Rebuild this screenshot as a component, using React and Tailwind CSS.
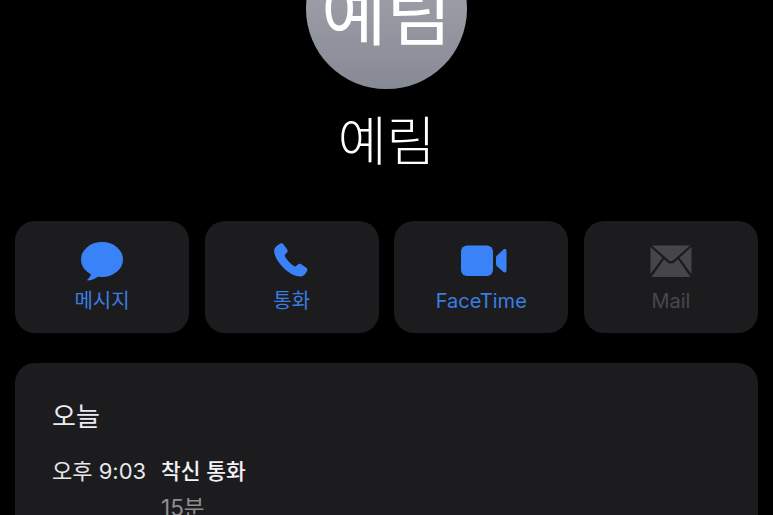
import React from "react";

const BLUE = "#3a82f7";

const MessageIcon = () => (
  <svg width="44" height="40" viewBox="0 0 44 40" fill={BLUE}>
    <ellipse cx="22" cy="18.5" rx="21" ry="17.5" />
    <path d="M11 30 C11.5 34 9.5 37 7.5 38.5 C7 39 7.5 39.6 8.2 39.5 C12.5 39.2 16 37.5 19 34.5 Z" />
  </svg>
);

const PhoneIcon = () => (
  <svg className="mr-[3px]" width="38" height="38" viewBox="0 0 36 36" fill={BLUE}>
    <path d="M8.6 1.6 C9.8 0.9 11 1.1 11.8 2.2 L15.2 6.9 C16 8 15.9 9.2 15 10.2 L13.4 11.8 C12.9 12.4 12.9 13 13.2 13.6 C14.9 17.2 18.4 21 22 23 C22.7 23.4 23.3 23.3 23.8 22.8 L25.2 21.5 C26.2 20.5 27.4 20.4 28.6 21.1 L33.2 24.1 C34.5 25 34.8 26.3 34.1 27.6 C32.8 30.2 30.4 32.6 27.6 32.7 C22.6 32.8 16.4 29.4 11.3 24 C6.2 18.6 2.6 12.4 3 7.6 C3.2 5.1 5.9 3 8.6 1.6 Z" />
  </svg>
);

const VideoIcon = () => (
  <svg className="ml-[6px]" width="46" height="32" viewBox="0 0 46 32" fill={BLUE}>
    <rect x="0" y="0.5" width="32" height="30.5" rx="6" />
    <path d="M35 12.5 C35 11.6 35.4 11 36 10.5 L42.5 4.5 C43.6 3.6 45.5 4.2 45.5 6 L45.5 25.5 C45.5 27.3 43.6 28 42.5 27 L36 21.2 C35.4 20.6 35 20 35 19 Z" />
  </svg>
);

const MailIcon = () => (
  <svg width="42" height="33" viewBox="0 0 42 33" fill="#46464a">
    <path d="M2 0.5 H40 L23 15.5 C21.8 16.6 20.2 16.6 19 15.5 Z" />
    <path d="M0.5 2 L12.5 12.8 L0.5 29 Z" />
    <path d="M41.5 2 L29.5 12.8 L41.5 29 Z" />
    <path d="M14 14.2 L17.6 17.4 C19.6 19 22.4 19 24.4 17.4 L28 14.2 L40.4 32 H1.6 Z" />
  </svg>
);

const actions = [
  { label: "메시지", icon: <MessageIcon />, color: "text-[#3a7ee0]" },
  { label: "통화", icon: <PhoneIcon />, color: "text-[#3a7ee0]" },
  { label: "FaceTime", icon: <VideoIcon />, color: "text-[#3a7ee0]" },
  { label: "Mail", icon: <MailIcon />, color: "text-[#48484c]" },
];

const App = () => {
  return (
    <div className="h-[515px] w-[773px] overflow-hidden bg-black font-['Inter','Noto_Sans_CJK_KR',sans-serif] text-white">
      <div className="flex flex-col items-center">
        <div className="-mt-[71px] flex h-[160px] w-[161px] items-center justify-center rounded-full bg-gradient-to-b from-[#a9abb4] to-[#878a94]">
          <span className="mt-[8px] text-[71px] font-normal leading-none">예림</span>
        </div>
        <h1 className="mt-[23px] text-[53px] font-light leading-[60px]">예림</h1>
      </div>

      <div className="mt-[49px] grid grid-cols-4 gap-[15.5px] px-[15px]">
        {actions.map((action) => (
          <div
            key={action.label}
            className="flex h-[112px] flex-col items-center rounded-[20px] bg-[#1c1c1e]"
          >
            <div className="mt-[20px] flex h-[40px] items-center justify-center">
              {action.icon}
            </div>
            <span className={`mt-[7px] text-[20px] leading-[26px] ${action.color}`}>
              {action.label}
            </span>
          </div>
        ))}
      </div>

      <div className="mx-[15px] mt-[30px] h-[200px] rounded-[20px] bg-[#1c1c1e] px-[37px] pt-[37px]">
        <p className="text-[26px] leading-[34px] text-[#ebebf0]">오늘</p>
        <div className="mt-[22px] flex">
          <span className="w-[109px] text-[22px] leading-[30px] text-[#e8e8ec]">오후 9:03</span>
          <div>
            <p className="text-[21.5px] font-medium leading-[30px] text-[#f2f2f5]">착신 통화</p>
            <p className="mt-[8px] text-[22.5px] leading-[28px] text-[#8e8e93]">15분</p>
          </div>
        </div>
      </div>
    </div>
  );
};

export default App;
